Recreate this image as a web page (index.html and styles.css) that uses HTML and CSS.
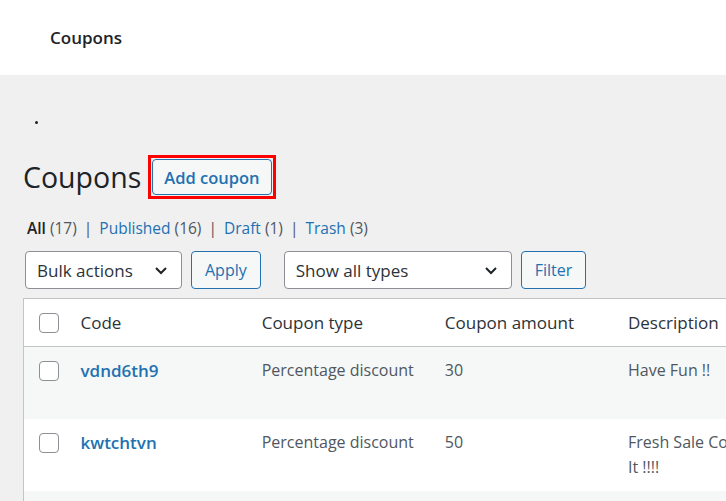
FILE: index.html
```html
<!DOCTYPE html>
<html lang="en">
<head>
  <meta charset="UTF-8">
  <meta name="viewport" content="width=device-width, initial-scale=1.0">
  <title>Coupons</title>
  <link rel="stylesheet" href="styles.css">
</head>
<body>
  <header class="topbar">
    <span class="topbar-title">Coupons</span>
  </header>

  <div class="wrap">
    <div class="notice-dot"><span></span></div>

    <div class="title-row">
      <h1>Coupons</h1>
      <span class="highlight"><a class="page-title-action" href="#">Add coupon</a></span>
    </div>

    <ul class="subsubsub">
      <li><strong>All</strong> <span class="count">(17)</span></li>
      <li class="sep">|</li>
      <li><a href="#">Published</a> <span class="count">(16)</span></li>
      <li class="sep">|</li>
      <li><a href="#">Draft</a> <span class="count">(1)</span></li>
      <li class="sep">|</li>
      <li><a href="#">Trash</a> <span class="count">(3)</span></li>
    </ul>

    <div class="tablenav">
      <div class="select bulk">
        <span>Bulk actions</span>
        <svg width="16" height="16" viewBox="0 0 16 16"><path d="M3 6l5 5 5-5" fill="none" stroke="#1d2327" stroke-width="2"/></svg>
      </div>
      <button class="button">Apply</button>
      <div class="select types">
        <span>Show all types</span>
        <svg width="16" height="16" viewBox="0 0 16 16"><path d="M3 6l5 5 5-5" fill="none" stroke="#1d2327" stroke-width="2"/></svg>
      </div>
      <button class="button">Filter</button>
    </div>

    <table class="list-table">
      <colgroup>
        <col class="c-cb">
        <col class="c-code">
        <col class="c-col">
        <col class="c-col">
        <col class="c-desc">
        <col class="c-col">
        <col class="c-col">
      </colgroup>
      <thead>
        <tr>
          <th class="cb"><span class="checkbox"></span></th>
          <th>Code</th>
          <th>Coupon type</th>
          <th>Coupon amount</th>
          <th>Description</th>
          <th>Product IDs</th>
          <th>Usage / Limit</th>
        </tr>
      </thead>
      <tbody>
        <tr class="alt">
          <td class="cb"><span class="checkbox"></span></td>
          <td><a class="code" href="#">vdnd6th9</a></td>
          <td>Percentage discount</td>
          <td>30</td>
          <td>Have Fun !!</td>
          <td>–</td>
          <td>0 / ∞</td>
        </tr>
        <tr>
          <td class="cb"><span class="checkbox"></span></td>
          <td><a class="code" href="#">kwtchtvn</a></td>
          <td>Percentage discount</td>
          <td>50</td>
          <td>Fresh Sale Coupon Grab It !!!!</td>
          <td>–</td>
          <td>0 / ∞</td>
        </tr>
        <tr class="alt">
          <td class="cb"><span class="checkbox"></span></td>
          <td><a class="code" href="#">summer20</a></td>
          <td>Fixed cart discount</td>
          <td>20</td>
          <td>Summer deal</td>
          <td>–</td>
          <td>0 / ∞</td>
        </tr>
      </tbody>
    </table>
  </div>
</body>
</html>
```

FILE: styles.css
```css
body {
  margin: 0;
  background: #f0f0f1;
  color: #1d2327;
  font-family: "Open Sans", "Noto Sans", sans-serif;
  overflow: hidden;
}
a {
  color: #2271b1;
  text-decoration: none;
}
.topbar {
  height: 75px;
  background: #ffffff;
  display: flex;
  align-items: center;
  padding-left: 50px;
}
.topbar-title {
  font-size: 17px;
  font-weight: 600;
  color: #1d2327;
  margin-top: -1px;
}
.wrap {
  padding-left: 23px;
}
.notice-dot {
  height: 10px;
  margin-top: 42px;
  display: flex;
  align-items: center;
  padding-left: 12px;
}
.notice-dot span {
  width: 3px;
  height: 3px;
  background: #1d2327;
  border-radius: 50%;
}
.title-row {
  margin-top: 28px;
  display: flex;
  align-items: center;
  gap: 7px;
}
h1 {
  margin: 0;
  font-size: 28.5px;
  font-weight: 400;
  color: #1d2327;
}
.highlight {
  border: 3px solid #ff0000;
  padding: 1px;
  display: flex;
}
.page-title-action {
  height: 34px;
  padding: 0 11px;
  display: flex;
  align-items: center;
  border: 1px solid #2271b1;
  border-radius: 4px;
  background: #f6f7f7;
  font-size: 16.5px;
  font-weight: 600;
}
.subsubsub {
  list-style: none;
  margin: 19px 0 0 4px;
  padding: 0;
  display: flex;
  gap: 7px;
  font-size: 15.5px;
  line-height: 20px;
  color: #50575e;
}
.subsubsub strong {
  color: #1d2327;
  font-weight: 600;
}
.tablenav {
  margin-top: 13px;
  margin-left: 2px;
  display: flex;
  gap: 9px;
  height: 38px;
}
.select {
  box-sizing: border-box;
  height: 38px;
  display: flex;
  align-items: center;
  justify-content: space-between;
  padding: 0 12px 0 11px;
  background: #ffffff;
  border: 1px solid #8c8f94;
  border-radius: 4px;
  font-size: 17px;
  color: #2c3338;
}
.bulk {
  width: 157px;
}
.types {
  width: 228px;
  margin-left: 14px;
}
.button {
  height: 38px;
  padding: 0 13px;
  border: 1px solid #2271b1;
  border-radius: 4px;
  background: #f6f7f7;
  color: #2271b1;
  font-family: inherit;
  font-size: 16px;
}
.list-table {
  margin-top: 9px;
  width: 1166px;
  table-layout: fixed;
  border-collapse: collapse;
  background: #ffffff;
  border: 1px solid #c3c4c7;
}
.c-cb {
  width: 47px;
}
.c-code {
  width: 181px;
}
.c-col {
  width: 183px;
}
.c-desc {
  width: 204px;
}
.list-table th {
  height: 47px;
  padding: 0 10px;
  text-align: left;
  font-weight: 400;
  font-size: 17px;
  color: #2c3338;
  border-bottom: 1px solid #c3c4c7;
}
.list-table td {
  height: 72px;
  box-sizing: border-box;
  padding: 11px 10px;
  vertical-align: top;
  font-size: 16px;
  line-height: 25px;
  color: #50575e;
}
.list-table tr.alt td {
  background: #f6f7f7;
}
.list-table .cb {
  padding-left: 15px;
  padding-right: 0;
}
.list-table td.cb {
  padding-top: 14px;
}
.checkbox {
  display: block;
  box-sizing: border-box;
  width: 20px;
  height: 20px;
  border: 1px solid #8c8f94;
  border-radius: 4px;
  background: #ffffff;
}
.code {
  font-size: 17px;
  font-weight: 600;
}
```
